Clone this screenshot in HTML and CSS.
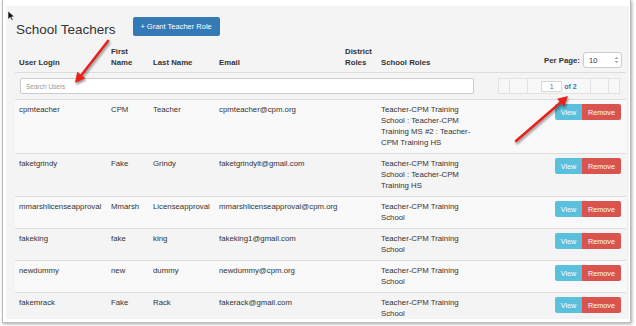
FILE: index.html
```html
<!DOCTYPE html>
<html lang="en">
<head>
    <meta charset="UTF-8">
    <meta name="viewport" content="width=device-width, initial-scale=1.0">
    <title>School Teachers</title>
    <link rel="stylesheet" href="styles.css">
</head>
<body>
    <div class="frame">
        <div class="page">
            <div class="title-bar">
                <h1>School Teachers</h1>
                <button class="btn btn-primary">+ Grant Teacher Role</button>
            </div>

            <table class="teachers">
                <colgroup>
                    <col style="width: 92px">
                    <col style="width: 42px">
                    <col style="width: 66px">
                    <col style="width: 126px">
                    <col style="width: 36px">
                    <col>
                    <col style="width: 86px">
                </colgroup>
                <thead>
                    <tr>
                        <th>User Login</th>
                        <th>First<br>Name</th>
                        <th>Last Name</th>
                        <th>Email</th>
                        <th>District<br>Roles</th>
                        <th>School Roles</th>
                        <th class="per-page-cell">
                            <div class="per-page">
                                <span>Per Page:</span>
                                <div class="select">
                                    <span>10</span>
                                    <svg class="spinner" width="5" height="8" viewBox="0 0 5 8">
                                        <path d="M0.5 3 L2.5 0.8 L4.5 3 Z M0.5 5 L2.5 7.2 L4.5 5 Z" fill="#aaa"/>
                                    </svg>
                                </div>
                            </div>
                        </th>
                    </tr>
                </thead>
                <tbody>
                    <tr class="search-row">
                        <td colspan="7">
                            <div class="search-bar">
                                <input class="search" type="text" placeholder="Search Users">
                                <div class="pager">
                                    <span class="seg seg-sm"></span>
                                    <span class="seg seg-md"></span>
                                    <span class="seg seg-page">
                                        <span class="page-input">1</span>
                                        <span class="page-total">of 2</span>
                                    </span>
                                    <span class="seg seg-md"></span>
                                    <span class="seg seg-sm"></span>
                                </div>
                            </div>
                        </td>
                    </tr>
                    <tr>
                        <td>cpmteacher</td>
                        <td>CPM</td>
                        <td>Teacher</td>
                        <td>cpmteacher@cpm.org</td>
                        <td></td>
                        <td>Teacher-CPM Training<br>School : Teacher-CPM<br>Training MS #2 : Teacher-<br>CPM Training HS</td>
                        <td class="actions"><span class="btn-group"><button class="btn btn-info">View</button><button class="btn btn-danger">Remove</button></span></td>
                    </tr>
                    <tr>
                        <td>faketgrindy</td>
                        <td>Fake</td>
                        <td>Grindy</td>
                        <td>faketgrindylt@gmail.com</td>
                        <td></td>
                        <td>Teacher-CPM Training<br>School : Teacher-CPM<br>Training HS</td>
                        <td class="actions"><span class="btn-group"><button class="btn btn-info">View</button><button class="btn btn-danger">Remove</button></span></td>
                    </tr>
                    <tr>
                        <td>mmarshlicenseapproval</td>
                        <td>Mmarsh</td>
                        <td>Licenseapproval</td>
                        <td>mmarshlicenseapproval@cpm.org</td>
                        <td></td>
                        <td>Teacher-CPM Training<br>School</td>
                        <td class="actions"><span class="btn-group"><button class="btn btn-info">View</button><button class="btn btn-danger">Remove</button></span></td>
                    </tr>
                    <tr>
                        <td>fakeking</td>
                        <td>fake</td>
                        <td>king</td>
                        <td>fakeking1@gmail.com</td>
                        <td></td>
                        <td>Teacher-CPM Training<br>School</td>
                        <td class="actions"><span class="btn-group"><button class="btn btn-info">View</button><button class="btn btn-danger">Remove</button></span></td>
                    </tr>
                    <tr>
                        <td>newdummy</td>
                        <td>new</td>
                        <td>dummy</td>
                        <td>newdummy@cpm.org</td>
                        <td></td>
                        <td>Teacher-CPM Training<br>School</td>
                        <td class="actions"><span class="btn-group"><button class="btn btn-info">View</button><button class="btn btn-danger">Remove</button></span></td>
                    </tr>
                    <tr>
                        <td>fakemrack</td>
                        <td>Fake</td>
                        <td>Rack</td>
                        <td>fakerack@gmail.com</td>
                        <td></td>
                        <td>Teacher-CPM Training<br>School</td>
                        <td class="actions"><span class="btn-group"><button class="btn btn-info">View</button><button class="btn btn-danger">Remove</button></span></td>
                    </tr>
                </tbody>
            </table>
        </div>
    </div>

    <!-- screenshot annotations -->
    <svg class="annotations" width="636" height="326" viewBox="0 0 636 326">
        <path d="M8 11 L8 19.5 L10.2 17.4 L11.9 20.6 L13.2 20 L11.6 16.9 L14.4 16.7 Z" fill="#111" stroke="#fff" stroke-width="0.6"/>
        <g class="arrow">
            <line x1="108" y1="41" x2="81.5" y2="75" stroke="#e8221b" stroke-width="2.6" stroke-linecap="round"/>
            <polygon points="75,83 85.4,78.3 77.2,71.8" fill="#e8221b"/>
        </g>
        <g class="arrow">
            <line x1="516" y1="141" x2="560" y2="103" stroke="#e8221b" stroke-width="2.6" stroke-linecap="round"/>
            <polygon points="568,96 564,106.6 557,98.7" fill="#e8221b"/>
        </g>
    </svg>
</body>
</html>
```

FILE: styles.css
```css
:root {
    --page-bg: #f4f4f4;
    --stripe-bg: #f9f9f9;
    --line-color: #dddddd;
    --text-color: #333333;
    --primary: #337ab7;
    --info: #5bc0de;
    --danger: #d9534f;
}

* {
    margin: 0;
    padding: 0;
    box-sizing: border-box;
}

body {
    font-family: "Liberation Sans", Arial, sans-serif;
    background-color: #ffffff;
    color: var(--text-color);
    width: 636px;
    height: 326px;
    overflow: hidden;
    position: relative;
}

.frame {
    margin-left: 2px;
    width: 629px;
    height: 323px;
    padding: 6px 1px 3px 3px;
    border: 1px solid #bdbdbd;
    border-top: none;
    box-shadow: 1px 1px 3px rgba(0, 0, 0, 0.35);
}

.page {
    height: 100%;
    background-color: var(--page-bg);
    overflow: hidden;
    padding: 11px 3px 0 9px;
}

.title-bar {
    display: flex;
    align-items: flex-end;
    gap: 17px;
    padding-left: 1px;
    margin-bottom: 9px;
}

h1 {
    font-size: 13.5px;
    font-weight: normal;
    line-height: 14px;
    margin-bottom: -1px;
}

.btn {
    font-family: inherit;
    border: none;
    color: #ffffff;
    cursor: pointer;
}

.btn-primary {
    background-color: var(--primary);
    font-size: 7.5px;
    height: 19px;
    width: 87px;
    border-radius: 2px;
}

.teachers {
    width: 611px;
    table-layout: fixed;
    border-collapse: collapse;
    font-size: 7.8px;
    line-height: 11px;
}

.teachers th {
    text-align: left;
    font-weight: bold;
    vertical-align: bottom;
    padding: 1px 4px 4px;
    border-bottom: 1px solid var(--line-color);
    white-space: nowrap;
}

.teachers td {
    vertical-align: top;
    padding: 4px 4px 5px;
    border-top: 1px solid var(--line-color);
    white-space: nowrap;
}

.teachers tbody tr:nth-child(even) {
    background-color: var(--stripe-bg);
}

.per-page-cell {
    padding-right: 6px;
}

.per-page {
    display: flex;
    align-items: center;
    justify-content: flex-end;
    gap: 3px;
    margin-bottom: 0;
}

.select {
    width: 40px;
    height: 16px;
    background-color: #ffffff;
    border: 1px solid #cccccc;
    border-radius: 3px;
    display: flex;
    align-items: center;
    justify-content: space-between;
    padding: 0 2px 0 5px;
    font-weight: normal;
    font-size: 7.5px;
}

.teachers .search-row td {
    border-top: none;
    padding: 5px 6px 5px 5px;
}

.search-bar {
    display: flex;
    align-items: center;
}

.search {
    width: 454px;
    height: 16px;
    border: 1px solid #cccccc;
    border-radius: 2px;
    background-color: #ffffff;
    padding: 0 5px;
    font-family: inherit;
    font-size: 6.5px;
    color: var(--text-color);
}

.search::placeholder {
    color: #999999;
}

.pager {
    margin-left: auto;
    display: flex;
    height: 16px;
}

.seg {
    display: flex;
    align-items: center;
    justify-content: center;
    background-color: #f8f8f8;
    border: 1px solid #e2e2e2;
    margin-left: -1px;
}

.seg-sm {
    width: 12px;
}

.seg-md {
    width: 19px;
}

.seg-page {
    width: 64px;
    gap: 2px;
    color: var(--primary);
    font-size: 7px;
    font-weight: bold;
}

.page-input {
    width: 21px;
    height: 11px;
    background-color: #ffffff;
    border: 1px solid #d6d6d6;
    border-radius: 1px;
    text-align: center;
    line-height: 9px;
    font-weight: normal;
}

.actions {
    text-align: right;
}

.teachers td.actions {
    padding-right: 5px;
}

.btn-group {
    display: inline-flex;
}

.btn-info,
.btn-danger {
    height: 16px;
    font-size: 7.2px;
}

.btn-info {
    width: 27px;
    background-color: var(--info);
    border-radius: 2px 0 0 2px;
}

.btn-danger {
    width: 39px;
    background-color: var(--danger);
    border-radius: 0 2px 2px 0;
}

.annotations {
    position: absolute;
    left: 0;
    top: 0;
    pointer-events: none;
}

.arrow {
    filter: drop-shadow(1px 2px 1px rgba(0, 0, 0, 0.4));
}
```
